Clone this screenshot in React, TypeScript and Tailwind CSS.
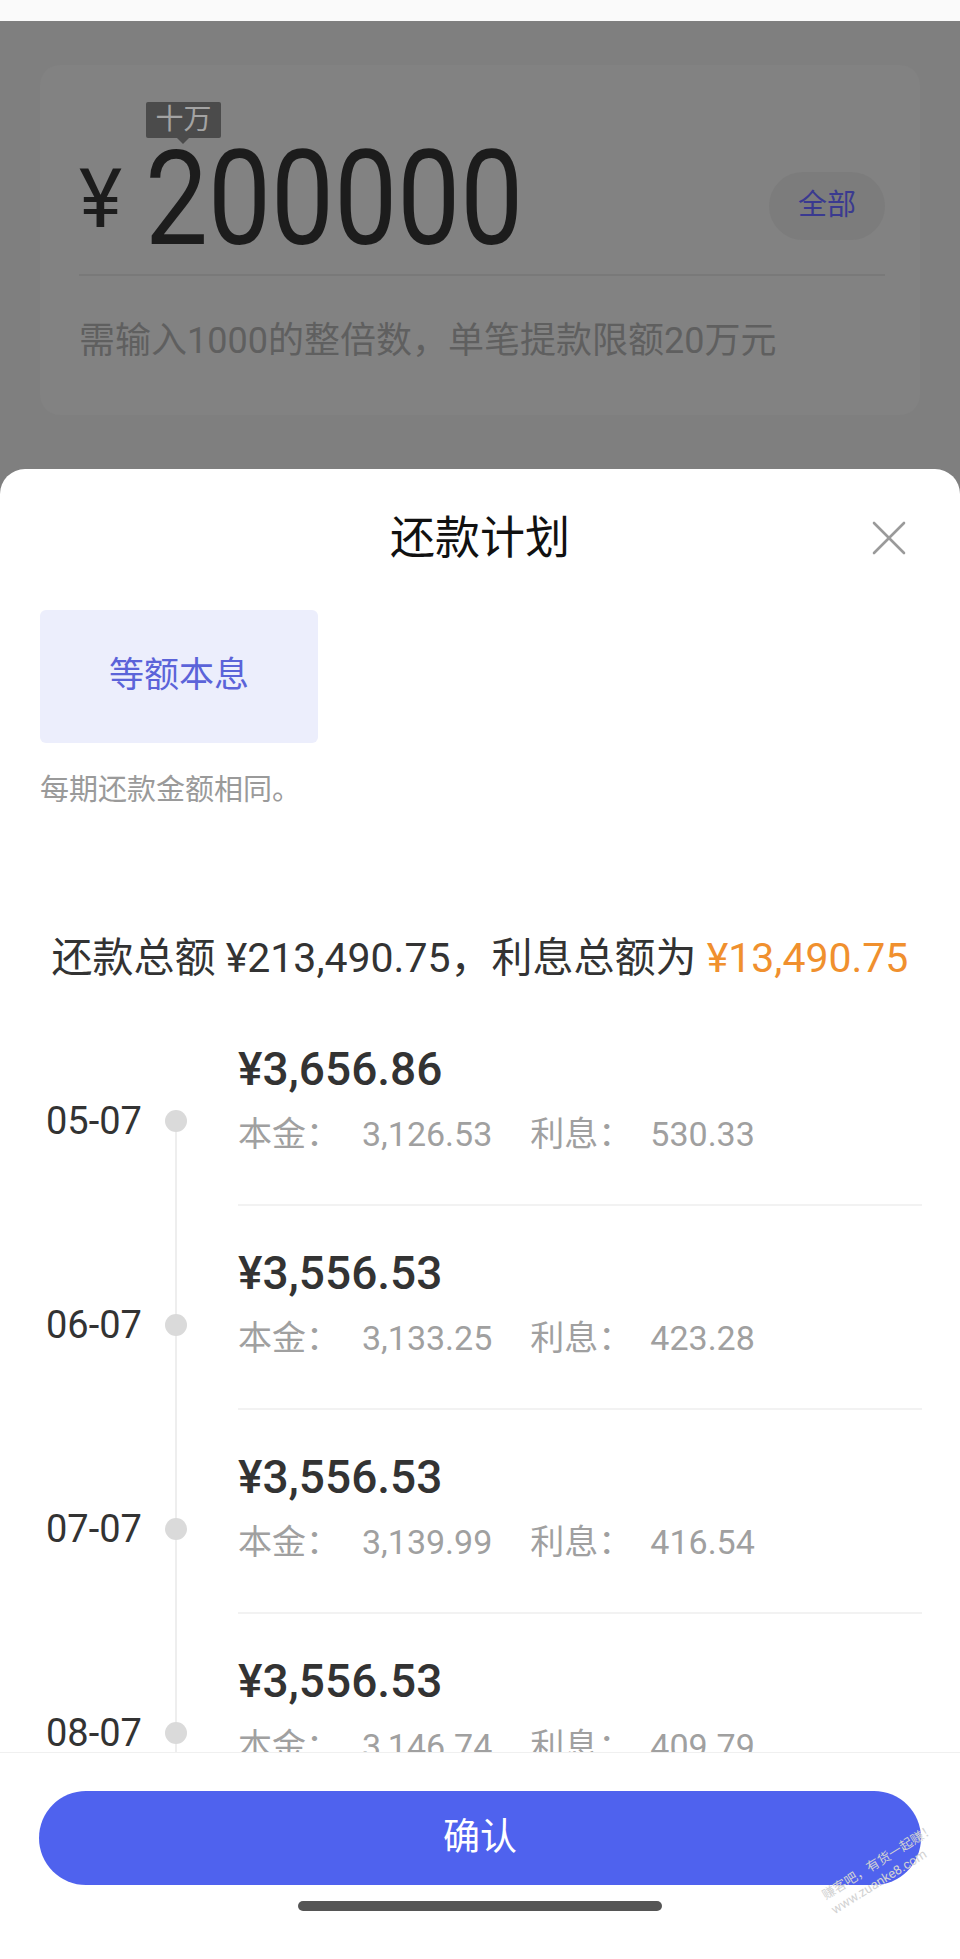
import React from "react";

const rows = [
  { date: "05-07", amount: "¥3,656.86", principal: "3,126.53", interest: "530.33" },
  { date: "06-07", amount: "¥3,556.53", principal: "3,133.25", interest: "423.28" },
  { date: "07-07", amount: "¥3,556.53", principal: "3,139.99", interest: "416.54" },
  { date: "08-07", amount: "¥3,556.53", principal: "3,146.74", interest: "409.79" },
];

function PlanRow({ row, first }: { row: (typeof rows)[number]; first: boolean }) {
  return (
    <div className="flex h-[204px] shrink-0 pl-[46px] pr-[38px]">
      {/* date */}
      <div className="w-[100px] whitespace-nowrap pt-[99px] text-[38px] leading-[40px] text-[#333]">{row.date}</div>
      {/* timeline */}
      <div className="ml-[19px] flex w-[22px] flex-col items-center">
        <div className={`h-[108px] w-[2px] ${first ? "bg-transparent" : "bg-[#eeeeee]"}`} />
        <div className="h-[22px] w-[22px] rounded-full bg-[#dadada]" />
        <div className="w-[2px] flex-1 bg-[#eeeeee]" />
      </div>
      {/* content */}
      <div className="ml-[51px] flex-1 border-b-2 border-[#f2f2f2] pt-[40px]">
        <div className="text-[46px] font-medium leading-[55px] text-[#333]">{row.amount}</div>
        <div className="mt-[17px] flex whitespace-nowrap text-[34px] leading-[40px] text-[#a0a0a0]">
          <span>本金：</span>
          <span className="ml-[22px]">{row.principal}</span>
          <span className="ml-[38px]">利息：</span>
          <span className="ml-[18px]">{row.interest}</span>
        </div>
      </div>
    </div>
  );
}

export default function App() {
  return (
    <div className="relative flex h-[1959px] w-[960px] flex-col overflow-hidden bg-[#7f7f7f] font-[Roboto,'Noto_Sans_CJK_SC',sans-serif]">
      {/* status strip */}
      <div className="h-[21px] shrink-0 bg-[#fafafa]" />

      {/* dimmed page behind the sheet */}
      <div className="h-[448px] shrink-0 px-[40px] pt-[44px]">
        <div className="h-[350px] rounded-[20px] bg-[#828282] pl-[39px] pr-[35px] pt-[68px]">
          <div className="flex items-center justify-between">
            <div className="flex items-center">
              <span className="text-[82px] leading-none text-[#1c1c1c]">¥</span>
              <span className="relative ml-[23px] inline-block">
                <span className="inline-block origin-left scale-x-[0.85] text-[132px] leading-none text-[#1c1c1c]">
                  200000
                </span>
                <span className="absolute left-[1px] top-[-31px] flex h-[36px] w-[75px] items-center justify-center rounded-[2px] bg-[#4b4b4b] text-[28px] leading-none text-[#a3a3a3]">
                  十万
                  <span className="absolute bottom-[-6px] left-[31px] h-0 w-0 border-x-[6px] border-t-[6px] border-x-transparent border-t-[#4b4b4b]" />
                </span>
              </span>
            </div>
            <div className="mt-[14px] flex h-[68px] w-[116px] items-center justify-center rounded-full bg-[#7c7c7c] text-[29px] text-[#3a3a90]">
              全部
            </div>
          </div>
          <div className="mt-[9px] h-[2px] bg-[#797979]" />
          <div className="mt-[43px] text-[36px] leading-[44px] text-[#5f5f5f]">
            需输入1000的整倍数，单笔提款限额20万元
          </div>
        </div>
      </div>

      {/* bottom sheet */}
      <div className="flex min-h-0 flex-1 flex-col rounded-t-[25px] bg-white">
        <div className="grid h-[138px] shrink-0 grid-cols-[1fr_auto_1fr] items-center">
          <div />
          <div className="text-[45px] leading-none text-[#111]">还款计划</div>
          <div className="flex justify-end pr-[54px]">
            <svg width="34" height="34" viewBox="0 0 34 34" fill="none" stroke="#9a9a9a" strokeWidth="2.6" strokeLinecap="round">
              <line x1="2" y1="2" x2="32" y2="32" />
              <line x1="32" y1="2" x2="2" y2="32" />
            </svg>
          </div>
        </div>

        <div className="ml-[40px] mt-[3px] flex h-[133px] w-[278px] shrink-0 items-center justify-center rounded-[6px] bg-[#eceefc] text-[35px] text-[#5b63d9]">
          等额本息
        </div>
        <div className="ml-[40px] mt-[27px] shrink-0 text-[29px] leading-[40px] text-[#9a9a9a]">每期还款金额相同。</div>

        <div className="mt-[124px] shrink-0 text-center text-[41px] leading-[48px] text-[#333]">
          还款总额 ¥213,490.75，利息总额为 <span className="text-[#f0902e]">¥13,490.75</span>
        </div>

        <div className="mt-[20px] flex min-h-0 flex-1 flex-col overflow-hidden">
          {rows.map((r, i) => (
            <PlanRow key={r.date} row={r} first={i === 0} />
          ))}
        </div>

        <div className="h-[207px] shrink-0 border-t border-[#f0f0f0] bg-white pt-[38px]">
          <button className="mx-[39px] flex h-[94px] w-[882px] items-center justify-center rounded-full bg-[#4f62ee] text-[37px] text-white">
            确认
          </button>
          <div className="mx-auto mt-[16px] h-[10px] w-[364px] rounded-full bg-[#555]" />
        </div>
      </div>

      {/* watermark */}
      <div className="pointer-events-none absolute left-[818px] top-[1852px] -rotate-[32deg] text-[13px] leading-[17px] text-[#d2d2d2]">
        <div>赚客吧，有货一起赚！</div>
        <div>www.zuanke8.com</div>
      </div>
    </div>
  );
}
